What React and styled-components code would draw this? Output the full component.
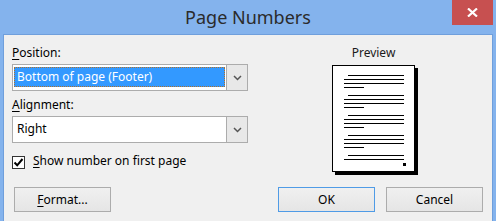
import React from "react";
import styled, { createGlobalStyle } from "styled-components";

const Global = createGlobalStyle`
  html, body { margin: 0; padding: 0; background: #84b3ed; }
  body { font-family: "Noto Sans", "Segoe UI", sans-serif; }
  * { box-sizing: border-box; }
`;

const Window = styled.div`
  width: 496px;
  height: 221px;
  background: #84b3ed;
  display: flex;
  flex-direction: column;
  padding: 0 3px;
`;

const TitleBar = styled.div`
  position: relative;
  height: 34px;
  display: flex;
  align-items: center;
  justify-content: center;
`;

const Title = styled.div`
  font-size: 18px;
  line-height: 34px;
  color: #2b2b2b;
`;

const CloseButton = styled.div`
  position: absolute;
  top: 0;
  right: 0;
  width: 41px;
  height: 25px;
  background: #c75050;
  display: flex;
  align-items: center;
  justify-content: center;
`;

const Client = styled.div`
  flex: 1;
  background: #f0f0f0;
  border: 1px solid #6f9fdc;
  border-bottom: none;
  display: flex;
  flex-direction: column;
  padding: 10px 9px 9px 8px;
  font-size: 12px;
  color: #000;
`;

const Top = styled.div`
  display: flex;
  align-items: flex-start;
`;

const LeftCol = styled.div`
  width: 236px;
  display: flex;
  flex-direction: column;
`;

const Label = styled.div`
  line-height: 16px;
  height: 16px;
  margin-top: ${(p) => p.$mt || 0}px;
  u { text-decoration-thickness: 1px; text-underline-offset: 2px; }
`;

const Select = styled.div`
  margin-top: 3px;
  height: 27px;
  border: 1px solid #acacac;
  background: #fff;
  display: flex;
`;

const SelectValue = styled.div`
  flex: 1;
  padding: 2px 0 3px 1px;
  display: flex;
`;

const ValueText = styled.div`
  flex: 1;
  line-height: 17px;
  padding-left: 2px;
  color: ${(p) => (p.$selected ? "#fff" : "#000")};
  background: ${(p) => (p.$selected ? "#3399ff" : "transparent")};
  border: 1px ${(p) => (p.$selected ? "dotted #b0702a" : "solid transparent")};
  margin-right: 1px;
`;

const DropButton = styled.div`
  width: 21px;
  border-left: 1px solid #acacac;
  background: #e8e8e8;
  display: flex;
  align-items: center;
  justify-content: center;
`;

const CheckRow = styled.div`
  margin-top: 11px;
  display: flex;
  align-items: flex-start;
  u { text-decoration-thickness: 1px; text-underline-offset: 2px; }
`;

const CheckBox = styled.div`
  width: 13px;
  height: 13px;
  margin-top: 2px;
  border: 1px solid #333;
  background: #fff;
  display: flex;
  align-items: center;
  justify-content: center;
`;

const CheckText = styled.div`
  margin-left: 8px;
  line-height: 14px;
`;

const PreviewCol = styled.div`
  margin-left: 84px;
  width: 86px;
  display: flex;
  flex-direction: column;
`;

const PreviewLabel = styled.div`
  line-height: 16px;
  width: 83px;
  text-align: center;
  color: #1a1a1a;
`;

const PageSvg = styled.svg`
  margin-top: 4px;
  display: block;
`;

const ButtonRow = styled.div`
  margin-top: auto;
  display: flex;
  gap: 11px;
`;

const Button = styled.div`
  width: 97px;
  height: 25px;
  border: 1px solid ${(p) => (p.$default ? "#4f9be6" : "#acacac")};
  background: linear-gradient(#f0f0f0, #e5e5e5);
  display: flex;
  align-items: center;
  justify-content: center;
  line-height: 16px;
  margin-left: ${(p) => (p.$push ? "auto" : p.$ml ? p.$ml + "px" : "0")};
  u { text-decoration-thickness: 1px; text-underline-offset: 2px; }
`;

const Chevron = () => (
  <svg width="9" height="6" viewBox="0 0 9 6">
    <path d="M1 1 L4.5 4.5 L8 1" fill="none" stroke="#555" strokeWidth="1.5" />
  </svg>
);

const paraYs = [10, 30, 50, 70];

const PagePreview = () => (
  <PageSvg width="86" height="110" viewBox="0 0 86 110" shapeRendering="crispEdges">
    <rect x="3" y="3" width="83" height="107" fill="#000" />
    <rect x="0.5" y="0.5" width="82" height="106" fill="#fff" stroke="#000" />
    {paraYs.map((y) => (
      <g key={y} fill="#000">
        <rect x="16" y={y} width="56" height="1" />
        <rect x="12" y={y + 4} width="60" height="1" />
        <rect x="12" y={y + 8} width="60" height="1" />
        <rect x="12" y={y + 12} width="20" height="1" />
      </g>
    ))}
    <rect x="16" y="90" width="56" height="1" fill="#000" />
    <rect x="12" y="94" width="60" height="1" fill="#000" />
    <rect x="71" y="98" width="3" height="3" fill="#000" />
  </PageSvg>
);

export default function App() {
  return (
    <>
      <Global />
      <Window>
        <TitleBar>
          <Title>Page Numbers</Title>
          <CloseButton>
            <svg width="11" height="9" viewBox="0 0 11 9">
              <path d="M1 0.5 L10 8.5 M10 0.5 L1 8.5" stroke="#fff" strokeWidth="2.2" />
            </svg>
          </CloseButton>
        </TitleBar>
        <Client>
          <Top>
            <LeftCol>
              <Label>
                <u>P</u>osition:
              </Label>
              <Select>
                <SelectValue>
                  <ValueText $selected>Bottom of page (Footer)</ValueText>
                </SelectValue>
                <DropButton>
                  <Chevron />
                </DropButton>
              </Select>
              <Label $mt={6}>
                <u>A</u>lignment:
              </Label>
              <Select>
                <SelectValue>
                  <ValueText>Right</ValueText>
                </SelectValue>
                <DropButton>
                  <Chevron />
                </DropButton>
              </Select>
              <CheckRow>
                <CheckBox>
                  <svg width="11" height="11" viewBox="0 0 11 11">
                    <path d="M1.5 5.5 L4.2 8.3 L9.5 2" fill="none" stroke="#000" strokeWidth="2" />
                  </svg>
                </CheckBox>
                <CheckText>
                  <u>S</u>how number on first page
                </CheckText>
              </CheckRow>
            </LeftCol>
            <PreviewCol>
              <PreviewLabel>Preview</PreviewLabel>
              <PagePreview />
            </PreviewCol>
          </Top>
          <ButtonRow>
            <Button $ml={2}>
              <span>
                <u>F</u>ormat...
              </span>
            </Button>
            <Button $default $push>
              OK
            </Button>
            <Button>Cancel</Button>
          </ButtonRow>
        </Client>
      </Window>
    </>
  );
}
